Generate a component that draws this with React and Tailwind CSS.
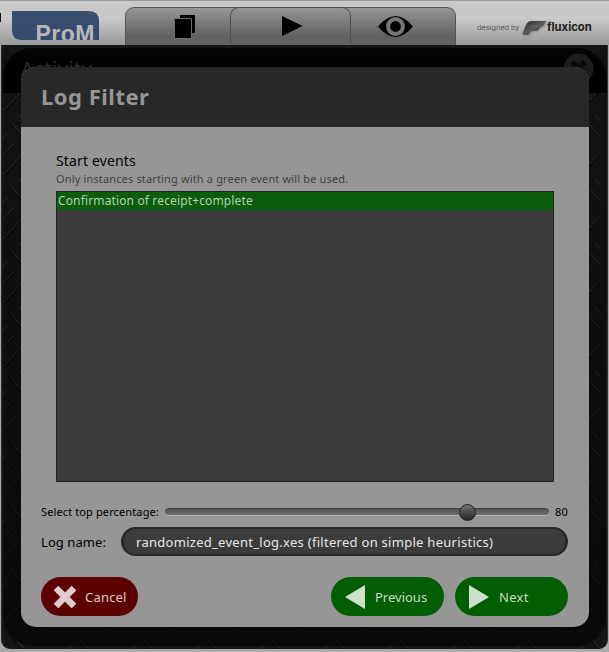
import React from "react";

function TreadPlate() {
  return (
    <svg className="absolute inset-0 h-full w-full" aria-hidden="true">
      <defs>
        <pattern id="tread" width="64" height="64" x="0" y="26" patternUnits="userSpaceOnUse">
          <g fill="none" strokeLinecap="round">
            <g stroke="#0a0a0a" strokeWidth="1.4">
              <path d="M2 20L14 8M3 40L20 22M36 48L50 32M37 60L46 52" />
              <path d="M9 -11L20 2M9 53L20 66M44 30L58 44M41 44L56 59" />
            </g>
            <g stroke="#353534" strokeWidth="0.9">
              <path d="M1 20L13 8M2 39L19 21M35 47L50 31M38 59L48 51M0 4L5 -1M0 68L5 63" />
              <path d="M10 -12L21 1M10 52L21 65M17 44L22 50M44 28L58 43M41 43L56 58M52 20L60 29" />
            </g>
          </g>
        </pattern>
      </defs>
      <rect width="100%" height="100%" fill="url(#tread)" />
    </svg>
  );
}

function TopBar() {
  return (
    <header className="flex h-[45px] border-t border-[#999] bg-linear-to-b from-[#c9c9c9] from-40% to-[#999]">
      <div className="mt-[12px] h-[9px] w-px bg-[#111]" />
      <svg className="mt-[10px] ml-[11px] h-[29px] w-[87px]" viewBox="0 0 87 29">
        <defs>
          <linearGradient id="logo" x2="0" y2="1">
            <stop stopColor="#3a4e70" />
            <stop offset="1" stopColor="#34496d" />
          </linearGradient>
        </defs>
        <path d="M0 0H77Q87 0 87 10V29H10Q0 29 0 19Z" fill="url(#logo)" />
        <text x="23.5" y="30.5" textLength="59" fontSize="23" fontWeight="700" fontFamily="Liberation Sans, sans-serif" fill="#b8b8b8">ProM</text>
      </svg>
      <nav className="mt-[6px] ml-[26px] flex h-[38px] w-[331px] rounded-t-[9px] border border-b-0 border-[#555] bg-linear-to-b from-[#969696] to-[#626262] to-75%">
        <div className="flex w-[104px]">
          <svg className="mt-[6px] ml-[48px] h-[25px] w-[22px]" viewBox="0 0 22 25">
            <path d="M6 1H21V19H6Z" fill="#000" />
            <path d="M0.500 4.500H17.500V24.500H0.500Z" fill="#000" stroke="#6d6d6d" strokeWidth="1" />
          </svg>
        </div>
        <div className="-mt-px flex w-[121px] rounded-t-[9px] border border-b-0 border-[#505050]">
          <svg className="mt-[8px] ml-[51px] h-[21px] w-[21px]" viewBox="0 0 21 21">
            <path d="M0 0L20.5 10L0 20Z" />
          </svg>
        </div>
        <div className="flex">
          <svg className="mt-[8px] ml-[27px] h-[21px] w-[35px]" viewBox="0 0 35 21">
            <path d="M0 10.5Q17.5-10.5 35 10.5Q17.5 31.5 0 10.5Z" />
            <circle cx="17.5" cy="10.5" r="7.4" fill="none" stroke="#777" strokeWidth="4" />
          </svg>
        </div>
      </nav>
      <div className="mt-[17px] ml-[21px] flex h-[18px] text-[#303030]">
        <span className="mt-px w-[45px] font-['Roboto',sans-serif] text-[8px] leading-[18px] font-light tracking-[0.03px] whitespace-nowrap">designed by</span>
        <svg className="mt-[2px] h-[17px] w-[25px] drop-shadow-[1px_1px_1px_#888]" viewBox="0 0 25 17">
          <defs>
            <linearGradient id="flux" y2="1">
              <stop stopColor="#2a2a2a" />
              <stop offset=".5" stopColor="#5a5a5a" />
              <stop offset="1" stopColor="#2a2a2a" />
            </linearGradient>
          </defs>
          <path d="M0 14.500L4.500 4Q6 1.200 9 1.100L24.500 1L20.500 6.200L18.500 6.800L16.500 9.500Q15 11 11.500 11L9 11.300Q7.500 14.800 4.500 15Z" fill="url(#flux)" />
          <path d="M9 6H20" stroke="#777" strokeWidth="0.6" />
        </svg>
        <span className="font-['Inter',sans-serif] text-[11.3px] leading-[18px] font-bold text-[#202020]">fluxicon</span>
      </div>
    </header>
  );
}

function PillButton({ className, icon, children }) {
  return (
    <button className={`flex h-[39px] items-center rounded-full text-left text-[13px] text-[#cbdccb] ${className}`}>
      {icon}
      <span className="mt-[2px]">{children}</span>
    </button>
  );
}

function Dialog() {
  return (
    <section className="absolute top-[67px] left-[21px] flex h-[560px] w-[568px] flex-col overflow-hidden rounded-[15px] bg-[#969696] text-black">
      <h1 className="flex h-[60px] items-center bg-[#282828] pb-[2px] pl-[20px] font-['Noto_Sans',sans-serif] text-[22px] font-bold tracking-[0.5px] text-[#969696]">
        Log Filter
      </h1>
      <div className="flex flex-1 flex-col px-[35px] pt-[25px]">
        <h2 className="h-[18px] text-[14px] leading-[18px] tracking-[0.15px]">Start events</h2>
        <p className="mt-px h-[15px] text-[11px] leading-[15px] tracking-[0.15px] text-[#414141]">
          Only instances starting with a green event will be used.
        </p>
        <ul className="mt-[5px] h-[291px] border border-[#222] bg-[#3c3c3c]">
          <li className="h-[18px] bg-[#0b5d0b] pl-px text-[12px] leading-[18px] tracking-[0.14px] text-[#b5d0b5]">
            Confirmation of receipt+complete
          </li>
        </ul>
      </div>
      <div className="flex h-[145px] flex-col px-[20px]">
        <div className="mt-[20px] flex h-[20px] items-center text-[11px]">
          <span className="w-[124px] tracking-[0.12px] whitespace-nowrap">Select top percentage:</span>
          <div className="flex h-[8px] w-[384px] items-center rounded-full border-t border-b border-t-[#424242] border-b-[#b5b5b5] bg-linear-to-b from-[#555] to-[#707070]">
            <div className="ml-[294px] h-[17px] w-[17px] rounded-full border border-[#222] bg-linear-to-b from-[#737373] to-[#242424]" />
          </div>
          <span className="ml-[6px] tracking-[0.2px]">80</span>
        </div>
        <div className="mt-[5px] flex h-[29px] items-center text-[13px]">
          <span className="mt-[2px] w-[80px] tracking-[0.08px]">Log name:</span>
          <div className="flex h-[29px] w-[447px] items-center rounded-full border-[3px] border-t-2 border-b-2 border-[#292929] bg-[#3c3c3c] pt-[2px] pl-[12px] tracking-[0.28px] text-[#e6e6e6]">
            randomized_event_log.xes (filtered on simple heuristics)
          </div>
        </div>
        <div className="mt-[21px] flex pr-px">
          <PillButton
            className="w-[97px] bg-[#5d0000] tracking-[0.2px] text-[#dccbcb]"
            icon={
              <svg className="mr-[9px] ml-[12px] h-[23px] w-[23px]" viewBox="0 0 23 23">
                <path d="M3 3L21 21M21 3L3 21" stroke="#e0cccc" strokeWidth="6.6" />
              </svg>
            }
          >
            Cancel
          </PillButton>
          <PillButton
            className="ml-auto w-[113px] bg-[#005d00]"
            icon={
              <svg className="mt-px mr-[10px] ml-[14px] h-[24px] w-[20px]" viewBox="0 0 20 24">
                <path d="M20 0V24L0 12Z" fill="#cce0cc" />
              </svg>
            }
          >
            Previous
          </PillButton>
          <PillButton
            className="ml-[11px] w-[113px] bg-[#005d00] tracking-[0.3px]"
            icon={
              <svg className="mt-px mr-[10px] ml-[14px] h-[24px] w-[20px]" viewBox="0 0 20 24">
                <path d="M0 0V24L20 12Z" fill="#cce0cc" />
              </svg>
            }
          >
            Next
          </PillButton>
        </div>
      </div>
    </section>
  );
}

export default function App() {
  return (
    <div className="relative h-[652px] w-[609px] overflow-hidden bg-[#aaa8a9] font-['Noto_Sans',sans-serif]">
      <TopBar />
      <main className="relative mr-px ml-px h-[604px] overflow-hidden rounded-b-[9px] border-x border-[#303030] bg-[#151515]">
        <TreadPlate />
        <div className="relative h-[48px] bg-linear-to-b from-[#151515] to-[#070707]" />
        <div className="absolute inset-x-[1px] top-[3px] bottom-[3px] overflow-hidden rounded-[29px] bg-linear-to-b from-black/10 to-black/60">
          <div className="flex h-[45px] items-start justify-between bg-linear-to-b from-[#060606] to-black pr-[11px] pl-[18px]">
            <span className="mt-[6px] text-[20px] tracking-[0.5px] text-[#2c2c2c]">Activity</span>
            <svg className="mt-[5px] h-[31px] w-[31px]" viewBox="0 0 31 31">
              <circle cx="14.500" cy="15.500" r="15" fill="#1c1c1c" />
              <path d="M8 9L21 22M21 9L8 22" stroke="#0a0a0a" strokeWidth="5.5" />
            </svg>
          </div>
        </div>
      </main>
      <Dialog />
    </div>
  );
}
